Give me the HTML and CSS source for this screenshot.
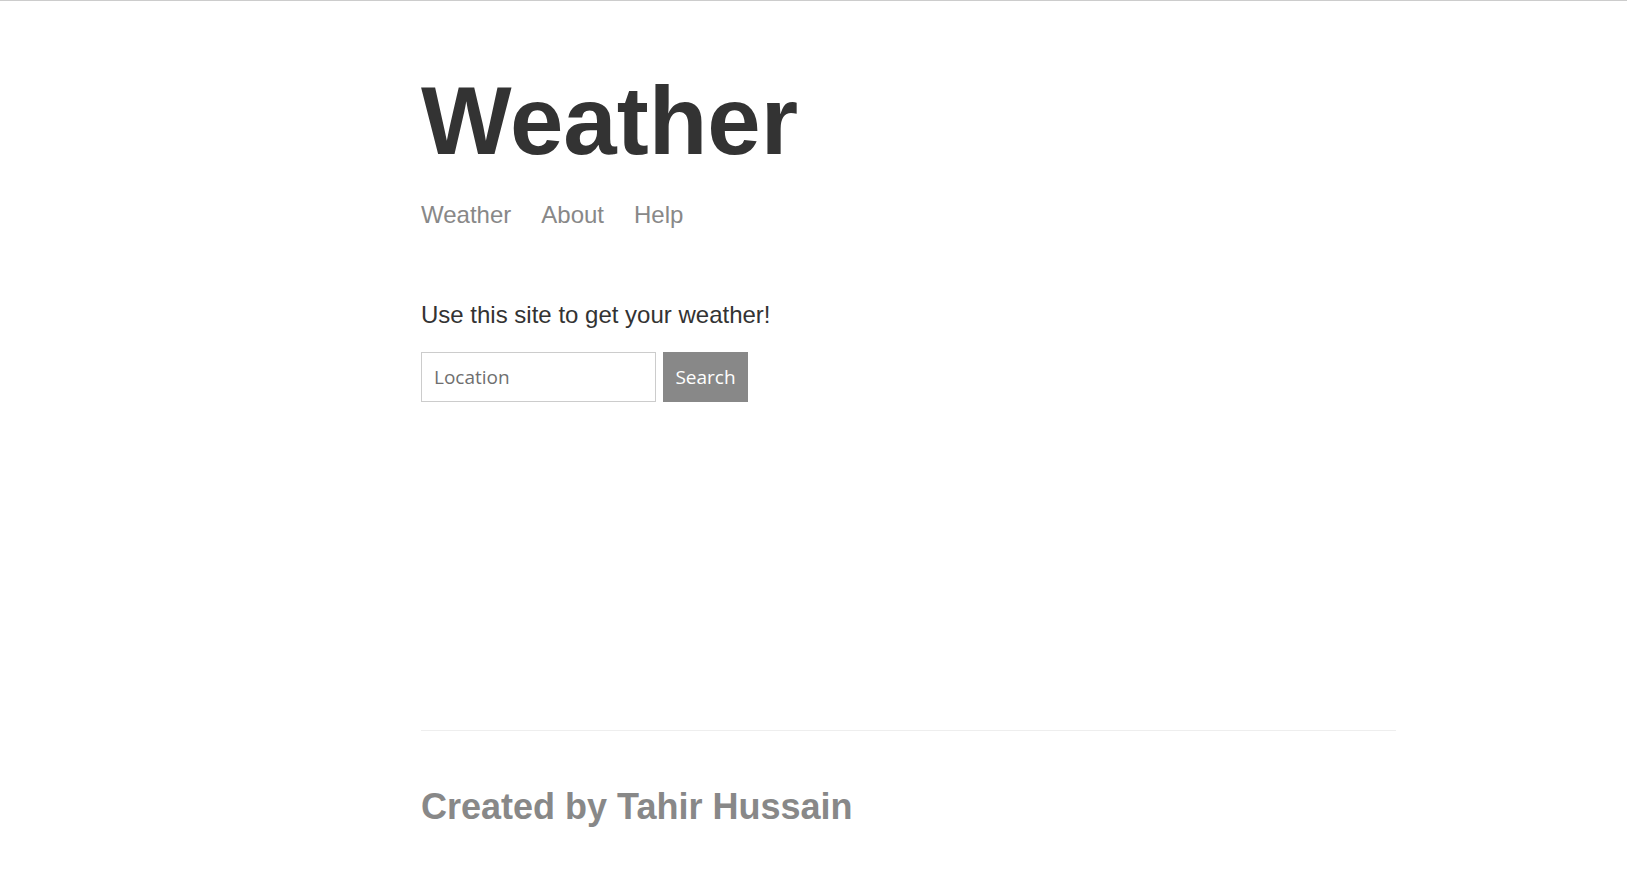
FILE: index.html
```html
<!DOCTYPE html>
<html lang="en">
<head>
<meta charset="utf-8">
<title>Weather</title>
<link rel="stylesheet" href="styles.css">
</head>
<body>
<div class="page">
  <div class="main-content">
    <header class="header">
      <h1 class="title">Weather</h1>
      <nav class="nav">
        <a class="nav-link" href="#">Weather</a>
        <a class="nav-link" href="#">About</a>
        <a class="nav-link" href="#">Help</a>
      </nav>
    </header>
    <p class="intro">Use this site to get your weather!</p>
    <form class="search-form">
      <input class="location-input" type="text" placeholder="Location">
      <button class="search-button" type="button">Search</button>
    </form>
  </div>
  <footer class="footer">
    <h2 class="footer-text">Created by Tahir Hussain</h2>
  </footer>
</div>
</body>
</html>
```

FILE: styles.css
```css
html, body {
  margin: 0;
  padding: 0;
  background: #ffffff;
}

body {
  border-top: 1px solid #cccccc;
  font-family: "Liberation Sans", Arial, sans-serif;
  color: #333333;
}

.page {
  width: 975px;
  margin-left: 421px;
  min-height: calc(100vh - 1px);
  display: flex;
  flex-direction: column;
}

.main-content {
  flex-grow: 1;
}

.header {
  margin-bottom: 72px;
}

.title {
  font-size: 96px;
  line-height: 110px;
  font-weight: 700;
  margin: 65px 0 25px;
  color: #333333;
}

.nav {
  font-size: 24px;
  line-height: 28px;
  display: flex;
  gap: 30px;
}

.nav-link {
  color: #888888;
  text-decoration: none;
}

.intro {
  font-size: 24px;
  line-height: 28px;
  margin: 0 0 23px;
  color: #333333;
}

.search-form {
  display: flex;
  gap: 7px;
  margin: 0;
}

.location-input {
  box-sizing: border-box;
  width: 235px;
  height: 50px;
  border: 1px solid #cccccc;
  padding: 0 12px;
  font-family: "Open Sans", "Noto Sans", sans-serif;
  font-size: 19px;
  color: #333333;
  outline: none;
  border-radius: 0;
}

.location-input::placeholder {
  color: #6f6f6f;
}

.search-button {
  box-sizing: border-box;
  width: 85px;
  height: 50px;
  border: none;
  background: #888888;
  color: #ffffff;
  font-family: "Open Sans", "Noto Sans", sans-serif;
  font-size: 19px;
  padding: 0;
  border-radius: 0;
  cursor: pointer;
}

.footer {
  margin-top: auto;
  border-top: 1px solid #eeeeee;
  padding: 24px 0;
  color: #888888;
}

.footer-text {
  font-size: 36px;
  line-height: 42px;
  font-weight: 700;
  margin: 31px 0 28px;
}
```
